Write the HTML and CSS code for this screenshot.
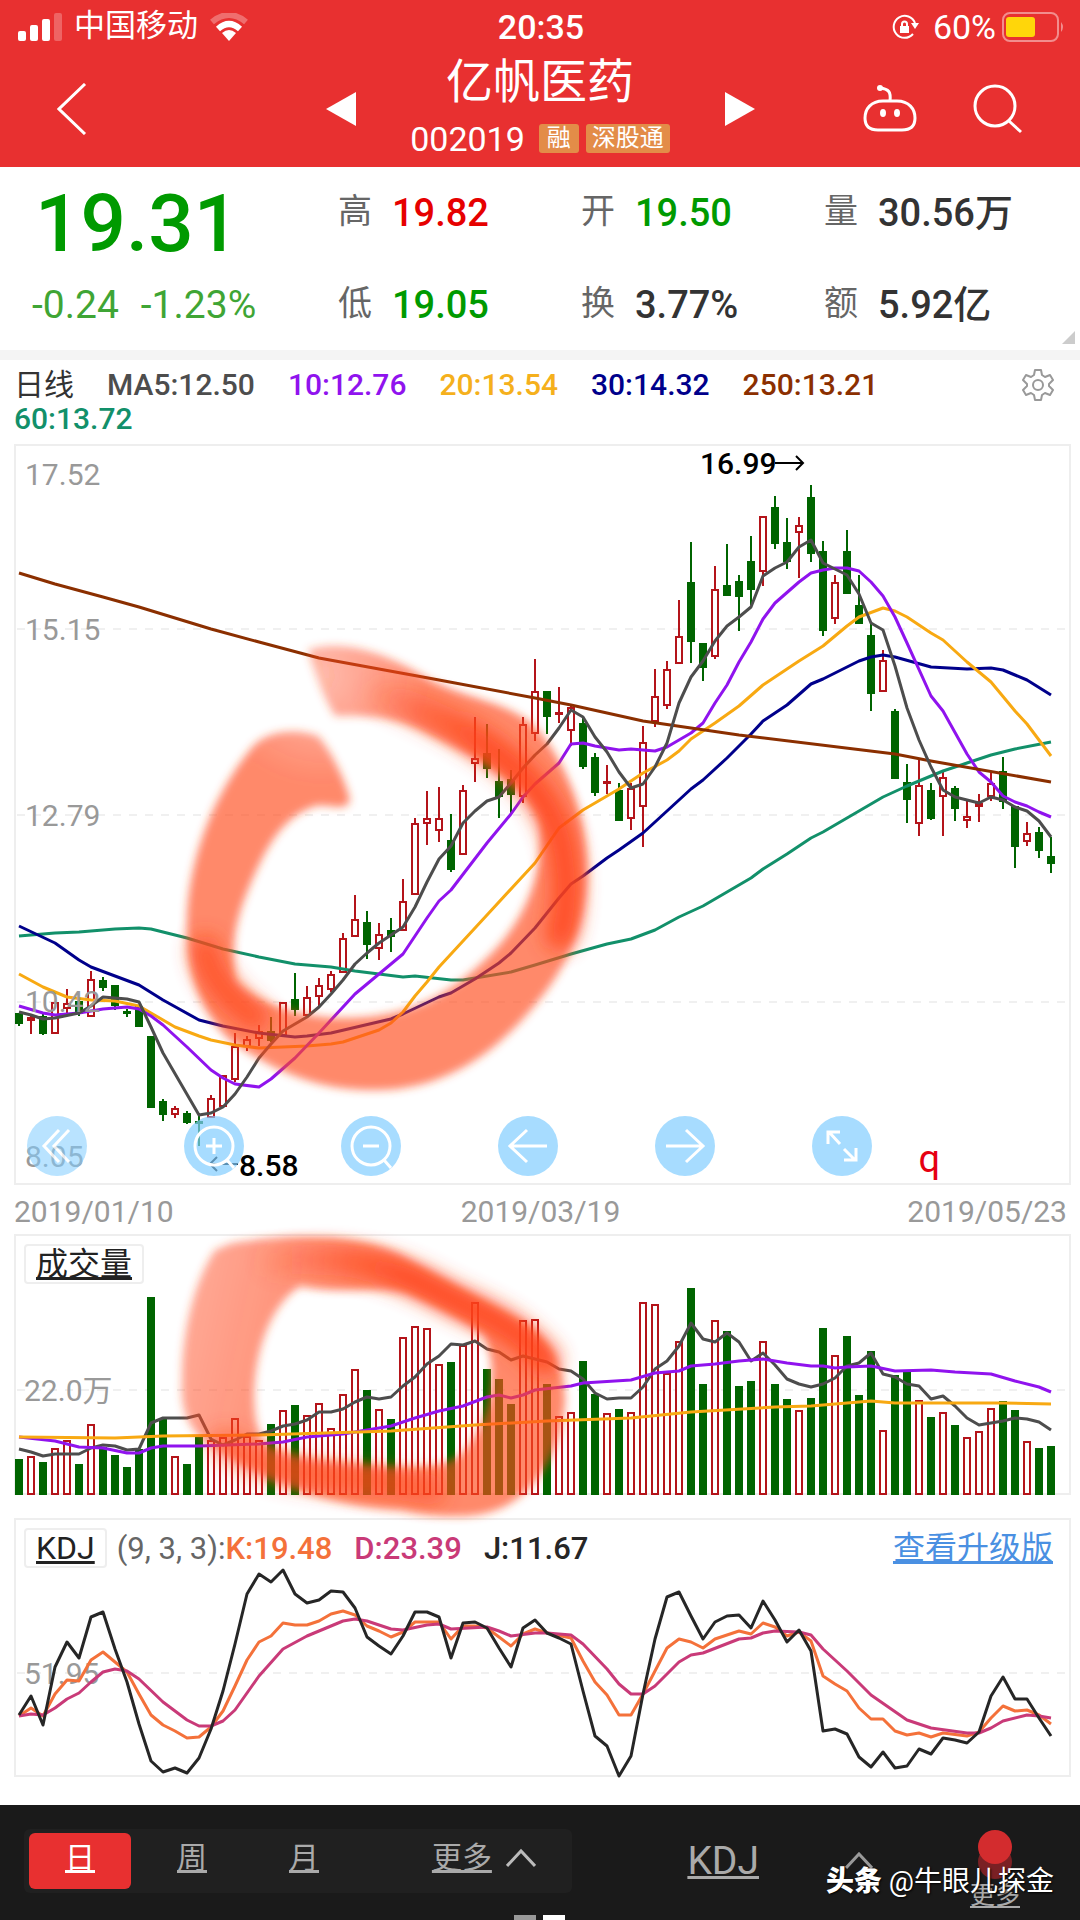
FILE: index.html
```html
<!DOCTYPE html>
<html lang="zh-CN">
<head>
    <meta charset="UTF-8">
    <meta name="viewport" content="width=device-width, initial-scale=1.0">
    <title>亿帆医药 002019</title>
    <link rel="stylesheet" href="styles.css">
</head>
<body>
    <header class="header">
        <div class="status">
            <div class="status-left">
                <svg width="44" height="29" viewBox="0 0 44 29" fill="#fff">
                    <rect x="0" y="18" width="8" height="10" rx="2"/>
                    <rect x="12" y="12" width="8" height="16" rx="2"/>
                    <rect x="24" y="6" width="8" height="22" rx="2"/>
                    <rect x="36" y="0" width="8" height="28" rx="2" opacity=".25"/>
                </svg>
                <span class="carrier">中国移动</span>
                <svg width="38" height="28" viewBox="0 0 38 28" fill="none" stroke="#fff" stroke-width="6">
                    <path d="M2 9Q19-5 36 9" opacity=".3"/>
                    <path d="M8 16Q19 6 30 16"/>
                    <path d="M12 20Q19 14 26 20L19 28Z" fill="#fff" stroke="none"/>
                </svg>
            </div>
            <span class="clock">20:35</span>
            <div class="status-right">
                <svg width="28" height="28" viewBox="0 0 28 28" fill="none" stroke="#fff" stroke-width="2">
                    <path d="M22 21A11 11 0 1 1 24 10"/>
                    <path d="M20 10H28L24 16Z" fill="#fff" stroke="none"/>
                    <rect x="9" y="13" width="9" height="7" fill="#fff" stroke="none"/>
                    <path d="M11 13V11a2.500 2.500 0 0 1 5 0V13"/>
                </svg>
                <span class="percent">60%</span>
                <svg width="62" height="30" viewBox="0 0 62 30">
                    <rect x="1" y="1" width="55" height="28" rx="7" fill="none" stroke="#fff" stroke-width="2" opacity=".45"/>
                    <rect x="4" y="5" width="29" height="20" rx="3" fill="#ffd60a"/>
                    <path d="M59 10q4 5 0 10z" fill="#fff" opacity=".45"/>
                </svg>
            </div>
        </div>
        <nav class="nav">
            <button class="icon-btn" aria-label="返回">
                <svg width="30" height="52" viewBox="0 0 30 52" fill="none" stroke="#fff" stroke-width="3"><path d="M28 1L2 26L28 51"/></svg>
            </button>
            <div class="stock">
                <button class="icon-btn" aria-label="上一只">
                    <svg width="30" height="34" viewBox="0 0 30 34" fill="#fff"><path d="M30 0V34L0 17Z"/></svg>
                </button>
                <div class="stock-name">
                    <h1>亿帆医药</h1>
                    <p class="code">002019 <span class="tag">融</span><span class="tag">深股通</span></p>
                </div>
                <button class="icon-btn" aria-label="下一只">
                    <svg width="30" height="34" viewBox="0 0 30 34" fill="#fff"><path d="M0 0V34L30 17Z"/></svg>
                </button>
            </div>
            <div class="nav-right">
                <button class="icon-btn" aria-label="助手">
                    <svg width="54" height="48" viewBox="0 0 54 48" fill="none" stroke="#fff" stroke-width="3">
                        <path d="M27 17C28 8 26 5 17 4"/>
                        <circle cx="17" cy="4" r="3" fill="#fff" stroke="none"/>
                        <path d="M20 17H34C46 17 52 25 52 34C52 42 48 46 39 46H15C6 46 2 42 2 34C2 25 8 17 20 17Z"/>
                        <ellipse cx="20" cy="29" rx="3" ry="4" fill="#fff" stroke="none"/>
                        <ellipse cx="34" cy="29" rx="3" ry="4" fill="#fff" stroke="none"/>
                    </svg>
                </button>
                <button class="icon-btn" aria-label="搜索">
                    <svg width="50" height="50" viewBox="0 0 50 50" fill="none" stroke="#fff" stroke-width="3"><circle cx="22" cy="22" r="20"/><path d="M36 37L48 48"/></svg>
                </button>
            </div>
        </nav>
    </header>

    <main>
        <section class="quote">
            <div class="price">
                <strong>19.31</strong>
                <p><span>-0.24</span><span>-1.23%</span></p>
            </div>
            <dl class="stats">
                <div><dt>高</dt><dd class="up">19.82</dd></div>
                <div><dt>开</dt><dd class="down">19.50</dd></div>
                <div><dt>量</dt><dd>30.56万</dd></div>
                <div><dt>低</dt><dd class="down">19.05</dd></div>
                <div><dt>换</dt><dd>3.77%</dd></div>
                <div><dt>额</dt><dd>5.92亿</dd></div>
            </dl>
            <i class="corner"></i>
        </section>

        <section class="legend">
            <div class="legend-items">
                <span class="period">日线</span>
                <span class="ma5">MA5:12.50</span>
                <span class="ma10">10:12.76</span>
                <span class="ma20">20:13.54</span>
                <span class="ma30">30:14.32</span>
                <span class="ma250">250:13.21</span>
                <span class="ma60">60:13.72</span>
            </div>
            <button class="icon-btn" aria-label="设置">
                <svg width="32" height="34" viewBox="0 0 32 34" fill="none" stroke="#999" stroke-width="2" stroke-linejoin="round">
                    <path d="M13 2H19L20 7L23 9L28 7L31 12L27 16V18L31 22L28 27L23 25L20 27L19 32H13L12 27L9 25L4 27L1 22L5 18V16L1 12L4 7L9 9L12 7Z"/>
                    <circle cx="16" cy="17" r="5"/>
                </svg>
            </button>
        </section>

        <section class="charts">
            <div class="panel">
                <svg class="chart" id="kline" viewBox="16 446 1053 737"></svg>
                <div class="tools">
                    <button class="faded" aria-label="收起"><svg viewBox="0 0 60 60"><path d="M32 14L17 30L32 46M42 14L27 30L42 46"/></svg></button>
                    <button aria-label="放大"><svg viewBox="0 0 60 60"><circle cx="30" cy="30" r="19"/><path d="M43 44L50 52M22 30H38M30 22V38"/></svg></button>
                    <button aria-label="缩小"><svg viewBox="0 0 60 60"><circle cx="30" cy="30" r="19"/><path d="M43 44L50 52M22 30H38"/></svg></button>
                    <button aria-label="左移"><svg viewBox="0 0 60 60"><path d="M49 30H12M29 14L12 30L29 46"/></svg></button>
                    <button aria-label="右移"><svg viewBox="0 0 60 60"><path d="M11 30H48M31 14L48 30L31 46"/></svg></button>
                    <button aria-label="全屏"><svg viewBox="0 0 60 60"><path d="M28 28L17 16M16 28V16H28M32 33L43 44M32 44H44V32"/></svg></button>
                    <span class="q">q</span>
                </div>
            </div>
            <div class="dates"><span>2019/01/10</span><span>2019/03/19</span><span>2019/05/23</span></div>
            <div class="panel volume">
                <svg class="chart" id="volume" viewBox="16 1237 1053 257"></svg>
                <div class="panel-head"><button class="picker">成交量</button></div>
            </div>
            <div class="panel">
                <svg class="chart" id="kdj" viewBox="16 1521 1053 255"></svg>
                <div class="panel-head">
                    <button class="picker">KDJ</button>
                    <span class="params">(9, 3, 3):</span><span class="k">K:19.48</span><span class="d">D:23.39</span><span class="j">J:11.67</span>
                    <a class="upgrade" href="#">查看升级版</a>
                </div>
            </div>
            <!-- hand-drawn marker rings -->
            <svg class="marks" viewBox="14 444 1057 1090">
                <defs>
                    <filter id="soft" x="-10%" y="-10%" width="120%" height="120%"><feGaussianBlur stdDeviation="4"/></filter>
                    <filter id="softer" x="-30%" y="-30%" width="160%" height="160%"><feGaussianBlur stdDeviation="10"/></filter>
                    <radialGradient id="fade" cx="320" cy="675" r="110" gradientUnits="userSpaceOnUse">
                        <stop offset="0" stop-color="#ff4a20" stop-opacity=".38"/>
                        <stop offset="1" stop-color="#ff4a20" stop-opacity=".66"/>
                    </radialGradient>
                    <linearGradient id="fade2" x1="190" y1="1360" x2="330" y2="1390" gradientUnits="userSpaceOnUse">
                        <stop offset="0" stop-color="#ff4a20" stop-opacity=".5"/>
                        <stop offset="1" stop-color="#ff4a20" stop-opacity=".66"/>
                    </linearGradient>
                    <linearGradient id="ink" x1="350" y1="700" x2="480" y2="740" gradientUnits="userSpaceOnUse">
                        <stop offset="0" stop-color="#ff4014" stop-opacity="0"/>
                        <stop offset="1" stop-color="#ff4014"/>
                    </linearGradient>
                    <linearGradient id="ink2" x1="250" y1="1260" x2="400" y2="1270" gradientUnits="userSpaceOnUse">
                        <stop offset="0" stop-color="#ff4014" stop-opacity="0"/>
                        <stop offset="1" stop-color="#ff4014"/>
                    </linearGradient>
                </defs>
                <g filter="url(#soft)">
                    <path fill="url(#fade)" d="M308 650C345 638 390 655 430 680C470 700 500 700 530 722C565 755 590 820 587 880C585 940 555 985 520 1022C480 1065 430 1092 370 1090C310 1090 265 1065 230 1040C195 1005 185 965 187 915C190 855 215 790 255 744C275 728 300 730 318 736C332 752 345 780 350 800C345 815 325 800 310 808C280 820 265 850 250 885C235 920 230 950 236 980C255 1003 300 1018 345 1018C410 1018 450 995 490 955C525 920 545 870 540 825C530 785 480 760 430 735C395 715 360 715 335 716C325 700 315 675 308 650Z"/>
                    <path fill="url(#fade2)" fill-rule="evenodd" d="M232 1243C275 1236 350 1230 400 1254L520 1320C555 1340 565 1375 565 1400C563 1440 545 1480 515 1500C485 1522 440 1518 400 1510C340 1508 270 1485 225 1455C190 1435 180 1415 182 1380C182 1330 195 1280 215 1250ZM300 1286C340 1295 375 1285 405 1293C440 1308 470 1325 484 1335C500 1370 490 1425 460 1455C440 1470 400 1468 370 1465C330 1460 285 1460 262 1440C245 1405 255 1315 300 1286Z"/>
                </g>
                <g fill="none" stroke="#ff4014" stroke-width="30" filter="url(#softer)" opacity=".8" stroke-linecap="round">
                    <path stroke="url(#ink)" d="M380 695C480 730 550 780 563 850C568 880 568 910 560 935"/>
                    <path d="M205 950C208 970 222 995 255 1018" opacity=".8"/>
                    <path stroke="url(#ink2)" d="M270 1262C380 1250 420 1285 460 1303S520 1332 545 1360"/>
                    <path d="M225 1445C270 1480 350 1475 430 1490" opacity=".6"/>
                </g>
            </svg>
        </section>
    </main>

    <footer class="bottom">
        <div class="bar">
            <div class="tabs">
                <button class="tab active">日</button>
                <button class="tab">周</button>
                <button class="tab">月</button>
                <button class="tab more">更多
                    <svg width="30" height="20" viewBox="0 0 30 20" fill="none" stroke="#bbb" stroke-width="3"><path d="M1 18L15 3L29 18"/></svg>
                </button>
            </div>
            <button class="indicator"><span>KDJ</span>
                <svg width="28" height="18" viewBox="0 0 28 18" fill="none" stroke="#999" stroke-width="3"><path d="M1 16L14 2L27 16"/></svg>
            </button>
            <button class="menu">
                <svg width="36" height="50" viewBox="0 0 36 50"><circle cx="18" cy="33" r="17" fill="#7a2024"/><circle cx="18" cy="18" r="17" fill="#d32c2e"/></svg>
                更多
            </button>
        </div>
        <div class="dots"><i></i><i class="on"></i></div>
        <p class="credit"><b>头条</b> @牛眼儿探金</p>
    </footer>
    <script src="script.js"></script>
</body>
</html>
```
FILE: styles.css
```css
* {
    box-sizing: border-box;
}
body {
    margin: 0;
    min-height: 100vh;
    display: flex;
    flex-direction: column;
    background: #fff;
    color: #333;
    font-family: Roboto, "Noto Sans CJK SC", sans-serif;
    font-size: 30px;
}
h1, p, dl, dd {
    margin: 0;
    font-weight: 400;
}
button {
    border: 0;
    padding: 0;
    background: none;
    color: inherit;
    font: inherit;
}
svg {
    display: block;
}
.icon-btn {
    display: flex;
}
main {
    flex: 1;
}

/* header */
.header {
    background: #e83030;
    color: #fff;
}
.status {
    height: 54px;
    padding: 0 16px 0 18px;
    display: grid;
    grid-template-columns: 1fr auto 1fr;
    align-items: center;
}
.status-left, .status-right {
    display: flex;
    align-items: center;
    gap: 12px;
}
.status-right {
    justify-content: flex-end;
    gap: 6px;
}
.status-right .percent {
    margin-left: 8px;
}
.carrier {
    font-size: 31px;
    line-height: 40px;
    padding-bottom: 3px;
}
.clock {
    font-size: 34px;
    font-weight: 500;
}
.percent {
    font-size: 34px;
}
.nav {
    height: 113px;
    padding: 0 57px;
    display: grid;
    grid-template-columns: 1fr auto 1fr;
    align-items: center;
}
.nav .icon-btn {
    margin-bottom: 4px;
}
.stock {
    display: flex;
    align-items: center;
}
.stock-name {
    width: 369px;
    text-align: center;
}
.stock-name h1 {
    font-size: 47px;
    line-height: 56px;
}
.code {
    display: flex;
    align-items: center;
    justify-content: center;
    gap: 7px;
    height: 57px;
    font-size: 34px;
}
.tag {
    padding: 0 6px;
    border-radius: 3px;
    background: #e38c48;
    font-size: 24px;
    line-height: 29px;
}
.tag:first-of-type {
    margin-left: 7px;
    padding: 0 8px;
}
.nav-right {
    display: flex;
    justify-content: flex-end;
    gap: 56px;
}

/* quote */
.quote {
    position: relative;
    display: grid;
    grid-template-columns: 306fr 742fr;
    padding-left: 32px;
    border-bottom: 10px solid #f4f4f4;
}
.price strong {
    display: block;
    padding-left: 3px;
    font-size: 80px;
    font-weight: 500;
    line-height: 114px;
    color: #009a00;
}
.price p {
    display: flex;
    gap: 22px;
    font-size: 39px;
    line-height: 48px;
    color: #3fa535;
}
.stats {
    display: grid;
    grid-template-columns: 243fr 243fr 256fr;
    grid-template-rows: 92px 91px;
}
.stats div {
    display: flex;
    align-items: center;
    gap: 20px;
}
.stats dt {
    font-size: 34px;
    line-height: 46px;
    padding-bottom: 4px;
    color: #666;
}
.stats dd {
    font-size: 38px;
    line-height: 48px;
    font-weight: 500;
    white-space: nowrap;
}
.stats .up {
    color: #e60000;
}
.stats .down {
    color: #009a00;
}
.corner {
    position: absolute;
    right: 5px;
    bottom: 6px;
    border-left: 13px solid transparent;
    border-bottom: 13px solid #ccc;
}

/* legend */
.legend {
    display: flex;
    align-items: flex-start;
    justify-content: space-between;
    padding: 8px 26px 8px 14px;
    line-height: 34px;
}
.legend-items {
    display: flex;
    flex-wrap: wrap;
    column-gap: 33px;
    max-width: 980px;
    font-weight: 500;
}
.legend .period {
    font-weight: 400;
}
.ma5 { color: #4d4d4d; }
.ma10 { color: #9013ee; }
.ma20 { color: #f5b01c; }
.ma30 { color: #00008b; }
.ma250 { color: #8b2f00; }
.ma60 { color: #12906a; }

/* charts */
.charts {
    position: relative;
    margin: 0 9px 0 14px;
}
.panel {
    position: relative;
    border: 2px solid #eee;
}
.chart {
    width: 100%;
    overflow: visible;
}
.chart text {
    font-size: 30px;
}
.chart .mark {
    font-weight: 500;
}
.axis {
    fill: #999;
}
.grid-line {
    stroke: #f0f0f0;
    stroke-width: 2;
    stroke-dasharray: 8 8;
}
.line {
    fill: none;
    stroke-width: 3;
    stroke-linejoin: round;
}
.rise {
    fill: #fff;
    stroke: #b4141a;
    stroke-width: 2;
}
.fall {
    fill: #006400;
    stroke: #006400;
    stroke-width: 2;
}
.tools {
    position: absolute;
    left: 1%;
    bottom: 6px;
    display: flex;
    align-items: center;
    gap: 97px;
}
.tools button {
    width: 60px;
    height: 60px;
    border-radius: 50%;
    background: rgba(130, 205, 255, 0.7);
}
.tools .faded {
    opacity: 0.8;
}
.tools svg {
    fill: none;
    stroke: #fff;
    stroke-width: 3;
}
.q {
    margin-left: -50px;
    padding-top: 26px;
    font-size: 38px;
    line-height: 36px;
    color: #e60012;
}
.dates {
    display: flex;
    justify-content: space-between;
    line-height: 45px;
    padding-top: 4px;
    padding-right: 4px;
    color: #999;
}
.volume {
    margin-bottom: 23px;
}
.panel-head {
    position: absolute;
    top: 8px;
    left: 8px;
    right: 16px;
    display: flex;
    align-items: center;
}
.picker {
    height: 40px;
    padding: 0 10px;
    border: 2px solid #eee;
    border-radius: 4px;
    background: #fff;
    font-size: 32px;
    line-height: 34px;
    color: #222;
    text-decoration: underline;
}
.params {
    margin-left: 10px;
    font-size: 31px;
    color: #666;
}
.k, .d, .j {
    margin-right: 22px;
    font-size: 31px;
    font-weight: 500;
}
.k { color: #f4713a; }
.d { color: #c93a78; }
.j { color: #262626; }
.upgrade {
    margin-left: auto;
    font-size: 32px;
    line-height: 40px;
    color: #4a90e2;
}
.marks {
    position: absolute;
    top: 0;
    left: 0;
    width: 100%;
    pointer-events: none;
}

/* bottom bar */
.bottom {
    position: relative;
    height: 115px;
    padding: 24px 60px 0 24px;
    background: #1a1a1a;
    color: #aaa;
}
.bar {
    display: flex;
    height: 86px;
}
.tabs {
    display: flex;
    align-items: center;
    width: 55%;
    height: 64px;
    padding: 4px 5px;
    border-radius: 6px;
    background: #202020;
}
.tab {
    width: 102px;
    height: 56px;
    margin-right: 10px;
    border-radius: 6px;
    line-height: 48px;
    padding-bottom: 6px;
    text-decoration: underline;
}
.tab.active {
    background: #e83030;
    color: #fff;
}
.tab.more {
    display: flex;
    align-items: center;
    justify-content: center;
    gap: 14px;
    width: auto;
    margin: 0 auto;
    padding-left: 36px;
}
.indicator {
    display: flex;
    align-items: center;
    gap: 86px;
    height: 64px;
    margin-left: auto;
    font-size: 39px;
    text-decoration: underline;
}
.menu {
    display: flex;
    flex-direction: column;
    align-items: center;
    margin-left: 97px;
    font-size: 25px;
    line-height: 34px;
    text-decoration: underline;
}
.dots {
    display: flex;
    justify-content: center;
    gap: 7px;
    padding-left: 34px;
}
.dots i {
    width: 22px;
    height: 5px;
    background: #999;
}
.dots .on {
    background: #fff;
}
.credit {
    position: absolute;
    right: 26px;
    bottom: 18px;
    font-size: 28px;
    line-height: 40px;
    color: #fff;
    text-shadow: 1px 1px 2px #000;
}
.credit b {
    font-weight: 900;
}
```
FILE: script.js
```js
// x position of day i
const px = i => 19 + i * 12;

// g = fall, r = rise: [high, body top, body bottom, low]
const candles = `g 1013 1013 1024 1026,r 1015 1017 1021 1034,g 1014 1016 1034 1035,r 1002 1002 1034 1034,r 989 1003 1009 1013,g 1000 1001 1014 1016,r 971 979 1017 1017,g 977 980 988 991,g 985 985 1006 1010,g 1009 1011 1014 1017,
g 1005 1006 1027 1027,g 1036 1036 1108 1108,g 1099 1101 1115 1121,r 1106 1108 1115 1118,g 1111 1113 1123 1124,g 1114 1121 1123 1146,r 1095 1098 1118 1118,r 1075 1075 1107 1107,r 1033 1046 1080 1082,r 1036 1039 1047 1051,
r 1025 1031 1039 1046,g 1017 1031 1041 1042,r 1002 1002 1036 1036,g 973 999 1010 1016,r 986 997 1016 1016,r 978 985 997 1006,r 971 974 990 992,r 933 938 973 973,r 895 919 937 937,g 911 922 945 959,
r 923 934 949 960,g 918 930 937 952,r 879 901 931 931,r 818 823 895 895,r 791 818 824 845,r 787 818 831 842,g 814 840 870 872,r 785 790 855 855,r 717 758 764 782,g 724 753 769 778,
g 749 781 797 818,g 770 779 795 813,r 717 724 797 803,r 659 691 734 741,g 691 691 717 734,r 687 712 713 723,r 705 707 731 746,g 718 723 767 769,g 753 757 793 796,r 765 781 782 794,
g 783 790 821 821,r 783 788 819 830,r 726 742 807 847,r 669 696 722 727,r 661 669 706 709,r 600 636 664 664,g 542 582 642 663,g 643 643 668 681,r 566 589 657 659,g 544 585 596 596,
g 575 581 597 631,g 536 561 590 605,r 516 516 572 586,g 496 507 544 549,g 518 542 562 569,r 517 525 533 578,g 485 497 554 562,g 541 551 631 636,r 575 582 619 624,g 530 551 594 594,
g 575 605 624 624,g 624 635 694 711,r 650 660 692 692,g 709 711 779 779,g 764 782 800 823,r 759 785 824 836,g 783 790 819 820,r 772 777 797 836,g 786 788 809 821,r 801 816 821 828,
r 794 803 807 822,r 771 783 797 801,g 757 771 802 809,g 806 806 847 868,r 822 833 842 846,g 827 832 851 858,g 837 856 864 873`.split(',').map(s => s.trim().split(' '));

const volumes = [1460,1457,1463,1449,1441,1465,1425,1448,1456,1468,1450,1298,1419,1457,1465,1438,1441,1438,1419,1437,
    1441,1425,1411,1406,1416,1404,1429,1395,1370,1391,1410,1420,1338,1327,1329,1365,1363,1346,1303,1370,
    1380,1405,1321,1320,1385,1417,1413,1362,1395,1414,1410,1413,1303,1305,1374,1342,1289,1385,1321,1332,
    1387,1382,1342,1385,1400,1411,1399,1329,1356,1337,1396,1352,1431,1376,1372,1401,1418,1413,1426,1438,
    1432,1409,1402,1411,1442,1449,1447];

// lines are "day:y" pairs
const klines = [
    ['#12906a', '0:936 3:933 5:932 8:929 10:928 11:929 14:938 17:949 20:957 23:964 26:967 28:971 32:977 33:976 36:980 37:980 41:972 43:965 46:954 49:944 51:939 53:930 55:917 57:906 59:892 61:878 62:869 64:854 66:838 67:832 70:811 72:797 74:786 77:771 79:763 81:755 83:749 86:742'],
    ['#00008b', '0:926 3:943 5:960 6:967 10:985 12:1000 15:1020 17:1026 20:1033 23:1037 24:1036 26:1033 31:1019 32:1014 35:997 36:993 38:979 40:963 41:953 43:928 45:898 46:884 47:876 49:858 50:850 52:833 54:811 56:789 57:780 59:758 61:734 62:721 63:713 64:705 66:684 67:679 70:661 71:657 72:655 73:657 76:667 79:669 81:668 82:670 84:680 86:695'],
    ['#f8a912', '0:974 2:987 4:997 6:1000 8:1001 10:1006 11:1013 13:1027 15:1036 16:1040 18:1045 20:1048 24:1046 26:1044 27:1042 30:1030 31:1023 32:1012 33:996 34:982 35:967 36:954 39:915 43:863 45:828 47:810 48:803 50:789 52:773 54:760 55:751 56:739 57:731 58:723 60:706 62:685 64:669 65:661 67:646 69:626 70:617 72:608 73:611 74:617 76:633 77:640 79:662 81:682 83:711 84:724 86:756'],
    ['#9013ee', '0:1006 2:1013 3:1015 5:1013 7:1009 9:1007 10:1009 11:1016 12:1025 14:1047 16:1070 17:1078 18:1084 20:1087 21:1079 23:1058 25:1033 26:1020 28:994 30:974 32:954 34:918 35:901 36:890 39:843 41:814 42:797 43:784 45:763 46:744 47:743 48:746 50:750 51:749 53:751 54:747 56:733 57:723 58:703 59:685 60:662 61:642 62:619 63:603 65:582 66:573 67:570 68:568 69:568 70:571 71:582 72:596 73:617 74:643 76:696 77:711 79:754 80:772 81:782 82:796 83:802 84:806 85:812 86:817'],
    ['#8b2f00', '0:573 3:584 7:597 10:607 16:629 20:642 25:658 35:680 43:698 46:705 52:721 56:728 60:735 73:754 76:761 86:782'],
    ['#4d4d4d', '0:1012 1:1015 2:1019 3:1018 5:1013 6:1006 7:997 9:999 10:1002 11:1027 12:1053 15:1115 16:1113 17:1107 18:1094 19:1077 20:1058 21:1044 22:1031 24:1017 25:1007 26:994 27:980 28:964 29:953 30:943 31:935 32:927 33:907 34:882 35:859 36:846 37:823 38:811 39:801 40:797 41:783 42:768 43:755 44:744 45:728 46:710 47:717 48:737 49:752 50:772 51:788 52:784 53:767 54:743 55:703 56:677 57:661 58:641 59:626 60:617 61:607 62:576 63:568 64:562 65:547 66:540 67:563 68:569 69:575 70:594 71:623 72:630 73:666 74:708 75:740 76:767 77:790 78:797 79:800 80:803 81:797 82:800 83:807 84:811 85:821 86:837']
];
const vlines = [
    ['#4d4d4d', '0:1450 1:1453 2:1457 3:1455 5:1455 6:1449 7:1446 8:1447 9:1451 10:1450 11:1424 12:1419 14:1419 15:1416 16:1440 17:1446 18:1441 19:1435 20:1435 21:1432 22:1427 23:1425 24:1421 25:1413 26:1413 27:1410 28:1403 29:1398 30:1400 31:1398 32:1387 33:1378 34:1365 35:1357 36:1345 37:1346 38:1342 39:1350 40:1353 41:1361 42:1357 43:1360 44:1363 45:1370 46:1372 47:1380 48:1394 49:1400 50:1399 51:1399 52:1388 53:1370 54:1362 55:1347 56:1324 57:1340 58:1343 59:1334 60:1343 61:1362 62:1354 63:1366 64:1380 65:1385 66:1388 67:1385 68:1379 69:1367 70:1364 71:1354 72:1375 73:1378 74:1385 75:1387 76:1400 77:1397 78:1407 79:1419 80:1426 82:1422 83:1419 84:1420 85:1423 86:1431'],
    ['#9013ee', '0:1438 3:1442 5:1448 7:1449 9:1454 10:1454 11:1449 12:1447 15:1447 20:1445 22:1443 24:1438 27:1435 31:1427 33:1419 35:1412 37:1407 39:1398 40:1396 41:1399 42:1396 43:1391 46:1387 47:1384 51:1381 53:1374 55:1372 56:1367 58:1365 60:1362 62:1360 64:1364 66:1367 67:1367 68:1369 69:1368 71:1367 73:1372 76:1371 78:1373 81:1375 83:1382 85:1388 86:1393'],
    ['#f8a912', '0:1438 8:1439 12:1437 20:1436 31:1432 38:1426 44:1422 51:1419 56:1413 63:1408 66:1407 71:1402 73:1404 82:1404 86:1405']
];
const kdjlines = [
    ['#f4713a', '0:1717 1:1709 2:1717 3:1695 4:1681 5:1682 6:1661 7:1653 8:1663 9:1673 10:1695 11:1716 12:1726 13:1732 14:1739 15:1738 16:1728 17:1712 18:1687 19:1661 20:1643 21:1637 22:1624 23:1626 24:1626 25:1622 26:1615 27:1612 28:1616 29:1627 30:1632 31:1638 32:1633 33:1623 35:1623 36:1640 37:1627 38:1627 39:1629 40:1638 41:1647 42:1635 43:1630 44:1634 46:1639 47:1662 48:1683 49:1696 50:1716 51:1716 52:1695 53:1672 54:1649 55:1640 56:1643 57:1649 58:1640 59:1636 60:1632 61:1635 62:1624 63:1628 64:1637 65:1633 66:1642 67:1677 68:1685 69:1692 70:1709 71:1720 72:1720 73:1732 74:1736 75:1734 76:1738 77:1734 79:1737 80:1733 81:1719 82:1707 83:1712 84:1711 85:1716 86:1725'],
    ['#c93a78', '0:1717 1:1715 2:1716 3:1709 4:1700 5:1694 6:1683 7:1673 8:1670 9:1672 10:1680 12:1703 14:1721 15:1727 16:1727 17:1722 18:1711 20:1677 22:1650 24:1637 26:1627 27:1622 28:1620 29:1622 31:1630 32:1631 34:1626 35:1625 36:1630 39:1628 40:1632 41:1637 43:1634 44:1634 46:1636 47:1645 49:1670 50:1685 51:1695 52:1695 53:1687 55:1663 56:1656 57:1654 60:1640 61:1639 62:1634 63:1632 65:1633 66:1636 67:1650 69:1672 71:1696 74:1721 76:1729 79:1734 80:1734 81:1729 82:1722 84:1716 85:1717 86:1719'],
    ['#262626', '0:1716 1:1697 2:1726 3:1668 4:1643 5:1659 6:1618 7:1613 8:1650 9:1683 10:1725 11:1762 12:1773 13:1769 14:1774 15:1759 16:1730 17:1692 18:1645 19:1595 20:1575 21:1583 22:1571 23:1595 24:1604 25:1601 26:1592 27:1593 28:1609 29:1638 30:1647 31:1655 32:1637 33:1613 34:1613 35:1618 36:1659 37:1624 38:1623 39:1629 40:1649 41:1668 42:1629 43:1621 44:1634 45:1639 46:1645 47:1692 48:1737 49:1747 50:1777 51:1757 52:1695 53:1640 54:1598 55:1593 56:1617 57:1640 58:1623 59:1617 60:1616 61:1629 62:1602 63:1621 64:1643 65:1631 66:1652 67:1732 68:1730 69:1735 70:1758 71:1768 72:1753 73:1769 74:1767 75:1750 76:1755 77:1739 78:1741 79:1744 80:1733 81:1697 82:1678 83:1700 84:1700 85:1719 86:1737']
];

function drawLines(lines) {
    return lines.map(([color, data]) => {
        const points = data.split(' ').map(p => {
            const [i, y] = p.split(':');
            return `${px(+i)},${y}`;
        }).join(' ');
        return `<polyline class="line" stroke="${color}" points="${points}"/>`;
    }).join('');
}

function bar(type, i, top, bottom) {
    return `<rect class="${type}" x="${px(i) - 3}" y="${+top + 1}" width="6" height="${Math.max(bottom - top - 2, 1)}"/>`;
}

function gridLine(y) {
    return `<line class="grid-line" x1="17" x2="1069" y1="${y}" y2="${y}"/>`;
}

function label(x, y, text) {
    return `<text class="axis" x="${x}" y="${y}">${text}</text>`;
}

const types = candles.map(c => c[0] === 'g' ? 'fall' : 'rise');

document.getElementById('kline').innerHTML =
    [629, 815, 1002].map(gridLine).join('') +
    candles.map(([, high, top, bottom, low], i) =>
        `<line class="${types[i]}" x1="${px(i)}" x2="${px(i)}" y1="${high}" y2="${low}"/>` + bar(types[i], i, top, bottom)
    ).join('') +
    drawLines(klines) +
    label(25, 485, '17.52') + label(25, 640, '15.15') + label(25, 826, '12.79') + label(25, 1012, '10.42') + label(25, 1167, '8.05') +
    '<text class="mark" x="700" y="474">16.99</text><path d="M775 463H803M796 456L803 463L796 470" fill="none" stroke="#000" stroke-width="2"/>' +
    '<text class="mark" x="239" y="1176">8.58</text><path d="M238 1164H210M217 1157L210 1164L217 1171" fill="none" stroke="#000" stroke-width="2"/>';

document.getElementById('volume').innerHTML =
    gridLine(1391) +
    volumes.map((v, i) => bar(types[i], i, v, 1496)).join('') +
    drawLines(vlines) + label(24, 1402, '22.0万');

document.getElementById('kdj').innerHTML =
    gridLine(1674) + label(24, 1685, '51.95') + drawLines(kdjlines);
```
